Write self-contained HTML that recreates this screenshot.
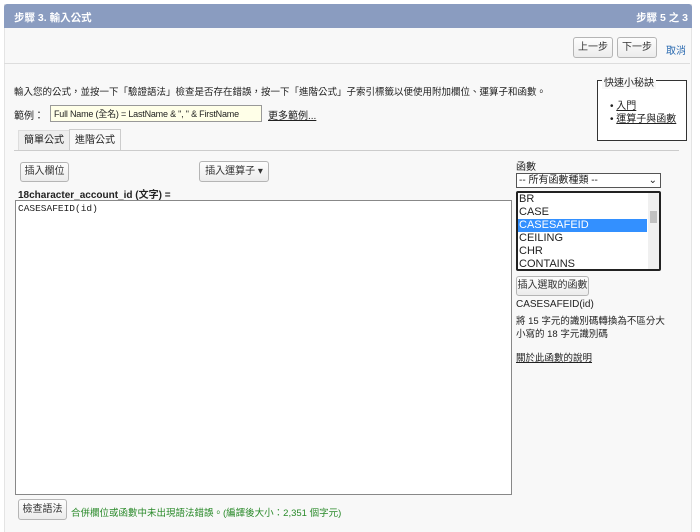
<!DOCTYPE html>
<html><head><meta charset="utf-8"><style>
body{margin:0;width:700px;height:532px;background:#fff;font-family:"Liberation Sans","Noto Sans CJK TC",sans-serif;font-size:10px;color:#222;position:relative;overflow:hidden}
.a{position:absolute}
.panel{left:4px;top:4px;width:686px;height:528px;background:#f8f8f8;border-left:1px solid #e4e4e4;border-right:1px solid #e4e4e4}
.hdr{left:4px;top:4px;width:688px;height:24px;background:#8a9cc0;color:#fff;font-weight:bold;font-size:10.5px;border-radius:3px 3px 0 0}
.btn{position:absolute;background:linear-gradient(#fdfdfd,#ececec);border:1px solid #b5b5b5;border-radius:3px;font-size:10px;color:#333;text-align:center;box-sizing:border-box}
u{text-decoration:underline}
</style></head><body>
<div class="a panel"></div>
<div class="a hdr"><span class="a" style="left:10px;top:6px">步驟 3. 輸入公式</span><span class="a" style="right:4px;top:6px">步驟 5 之 3</span></div>
<div class="btn" style="left:573px;top:37px;width:40px;height:21px;line-height:19px">上一步</div>
<div class="btn" style="left:617px;top:37px;width:40px;height:21px;line-height:19px">下一步</div>
<div class="a" style="left:666px;top:42px;color:#2a6ab0">取消</div>
<div class="a" style="left:4px;top:63px;width:686px;border-top:1px solid #ddd"></div>
<div class="a" style="left:14px;top:84px;font-size:9.5px">輸入您的公式，並按一下「驗證語法」檢查是否存在錯誤，按一下「進階公式」子索引標籤以便使用附加欄位、運算子和函數。</div>
<div class="a" style="left:14px;top:107px">範例：</div>
<div class="a" style="left:50px;top:105px;width:212px;box-sizing:border-box;border:1px solid #999;background:#ffffe8;padding:1px 3px;font-size:9px;white-space:nowrap;letter-spacing:-0.2px;overflow:hidden">Full Name (全名) = LastName &amp; ", " &amp; FirstName</div>
<div class="a" style="left:268px;top:107px"><u>更多範例...</u></div>
<div class="a" style="left:597px;top:80px;width:88px;height:59px;border:1px solid #333;background:#fff"></div>
<div class="a" style="left:602px;top:74px;background:#f8f8f8;padding:0 2px">快速小秘訣</div>
<div class="a" style="left:610px;top:100px;line-height:13px">• <u>入門</u><br>• <u>運算子與函數</u></div>
<div class="a" style="left:18px;top:130px;width:50px;height:19px;border:1px solid #ddd;border-bottom:none;background:#eee;text-align:center;line-height:19px">簡單公式</div>
<div class="a" style="left:69px;top:129px;width:50px;height:21px;border:1px solid #ccc;border-bottom:none;background:#f8f8f8;text-align:center;line-height:21px">進階公式</div>
<div class="a" style="left:14px;top:150px;width:665px;border-top:1px solid #ccc"></div>
<div class="btn" style="left:20px;top:162px;width:49px;height:20px;line-height:18px">插入欄位</div>
<div class="btn" style="left:199px;top:161px;width:70px;height:21px;line-height:19px">插入運算子 ▾</div>
<div class="a" style="left:18px;top:186px;font-weight:bold;font-size:10px">18character_account_id (文字) =</div>
<div class="a" style="left:15px;top:200px;width:497px;height:295px;border:1px solid #888;background:#fff;font-family:'Liberation Mono',monospace;font-size:9.5px;padding:2px 2px;box-sizing:border-box">CASESAFEID(id)</div>
<div class="a" style="left:516px;top:158px">函數</div>
<div class="a" style="left:516px;top:173px;width:145px;height:15px;border:1px solid #555;background:#fff;box-sizing:border-box;line-height:13px;padding-left:2px">-- 所有函數種類 --<span class="a" style="right:3px;top:0">⌄</span></div>
<div class="a" style="left:516px;top:191px;width:145px;height:80px;border:2px solid #222;border-radius:2px;background:#fff;box-sizing:border-box;font-size:11px;line-height:13px;overflow:hidden">
<div style="padding-left:1px">BR</div><div style="padding-left:1px">CASE</div><div style="padding-left:1px;background:#3390ff;color:#fff;width:128px">CASESAFEID</div><div style="padding-left:1px">CEILING</div><div style="padding-left:1px">CHR</div><div style="padding-left:1px">CONTAINS</div>
<div class="a" style="right:0;top:0;width:11px;height:76px;background:#f0f0f0"></div>
<div class="a" style="right:2px;top:18px;width:7px;height:12px;background:#c0c0c0"></div>
</div>
<div class="btn" style="left:516px;top:276px;width:73px;height:20px;line-height:18px">插入選取的函數</div>
<div class="a" style="left:516px;top:299px">CASESAFEID(id)</div>
<div class="a" style="left:516px;top:315px;width:150px;line-height:13px;font-size:9.5px">將 15 字元的識別碼轉換為不區分大小寫的 18 字元識別碼</div>
<div class="a" style="left:516px;top:350px;font-size:9.5px"><u>關於此函數的說明</u></div>
<div class="btn" style="left:18px;top:499px;width:49px;height:21px;line-height:19px">檢查語法</div>
<div class="a" style="left:71px;top:505px;color:#2a8a2a;font-size:9.5px">合併欄位或函數中未出現語法錯誤。(編譯後大小：2,351 個字元)</div>
</body></html>
